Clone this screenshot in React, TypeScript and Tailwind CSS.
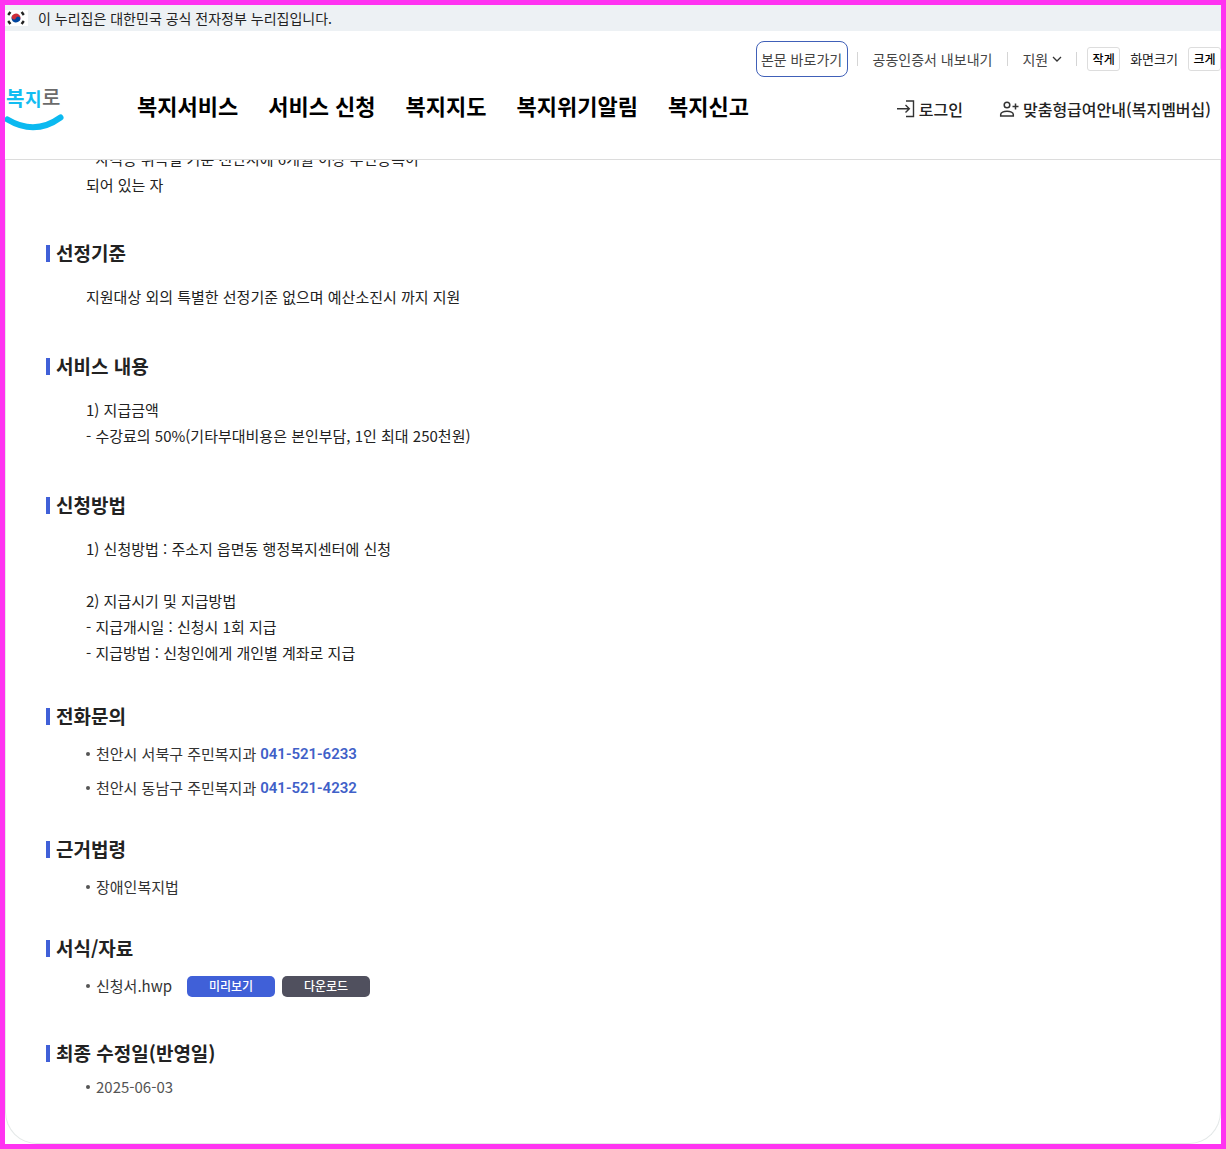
import type { ReactNode } from "react";

const menus = ["복지서비스", "서비스 신청", "복지지도", "복지위기알림", "복지신고"];

const phones = [
  { name: "천안시 서북구 주민복지과", tel: "041-521-6233" },
  { name: "천안시 동남구 주민복지과", tel: "041-521-4232" },
];

function Flag() {
  return (
    <svg className="w-[23px] h-4 bg-white" viewBox="0 0 23 16" aria-hidden="true">
      <g transform="rotate(20 11 8)">
        <path d="M6.500 8a4.500 4.500 0 0 1 9 0z" fill="#cd2e3a" />
        <path d="M6.500 8a4.500 4.500 0 0 0 9 0z" fill="#0047a0" />
        <circle cx="8.750" cy="8" r="2.250" fill="#cd2e3a" />
        <circle cx="13.250" cy="8" r="2.250" fill="#0047a0" />
      </g>
      <g stroke="#222" strokeWidth="2.400">
        <path d="M3.200 5l2.200-3" />
        <path d="M16.600 2l2.200 3" />
        <path d="M3.200 11l2.200 3" />
        <path d="M16.600 14l2.200-3" />
      </g>
    </svg>
  );
}

function Logo() {
  return (
    <svg className="w-[60px] h-[54px]" viewBox="0 0 60 54" role="img" aria-label="복지로">
      <g fontWeight="700">
        <text x="1" y="27" fontSize="20" fill="#12bdf2">복</text>
        <text x="20" y="27" fontSize="18" fill="#12bdf2">지</text>
        <text x="37" y="26" fontSize="20" fontWeight="500" fill="#6b6b6b">로</text>
      </g>
      <path d="M2.500 40.500Q30 57 55.500 38.500" fill="none" stroke="#0bb9f0" strokeWidth="6" strokeLinecap="round" />
    </svg>
  );
}

function Divider() {
  return <span className="w-px h-3.5 bg-[#d5d5d5]" />;
}

function Header() {
  return (
    <header className="flex h-[129px] border-b border-[#dcdcdc]">
      <a href="#" className="mt-12 w-[60px] shrink-0">
        <Logo />
      </a>
      <nav className="mt-[59px] ml-[72px] flex gap-[30px] whitespace-nowrap text-[22px] leading-[30px] font-bold text-black">
        {menus.map((menu) => (
          <a key={menu} href="#">{menu}</a>
        ))}
      </nav>
      <div className="ml-auto flex flex-col items-end whitespace-nowrap">
        <div className="mt-2.5 flex h-9 items-center text-sm text-[#444]">
          <a href="#content" className="flex h-9 w-[92px] items-center justify-center rounded-lg border border-[#4060b8]">본문 바로가기</a>
          <span className="w-[9px]" />
          <Divider />
          <a href="#" className="mx-[15px]">공동인증서 내보내기</a>
          <Divider />
          <button type="button" className="mx-3.5 flex items-center gap-1">
            지원
            <svg className="w-2.5 h-2" viewBox="0 0 10 8" fill="none" stroke="#333" strokeWidth="1.300">
              <path d="M1 2l4 4 4-4" />
            </svg>
          </button>
          <Divider />
          <button type="button" className="ml-2.5 h-6 w-[33px] rounded-[3px] border border-[#ddd] text-xs font-medium text-black">작게</button>
          <span className="mx-2.5 text-[13px] text-[#222]">화면크기</span>
          <button type="button" className="h-6 w-[33px] rounded-[3px] border border-[#ddd] text-xs font-medium text-black">크게</button>
        </div>
        <div className="mt-5 mr-2.5 flex gap-9 text-base font-medium text-[#222]">
          <a href="#" className="flex items-center gap-1">
            <svg className="w-[18px] h-[18px]" viewBox="0 0 18 18" fill="none" stroke="#333" strokeWidth="1.400">
              <path d="M9 1h7.500v15.500H9M0 8.700h12M8.500 5l3.800 3.700-3.800 3.700" />
            </svg>
            로그인
          </a>
          <a href="#" className="flex items-center gap-1">
            <svg className="w-5 h-[18px]" viewBox="0 0 20 18" fill="none" stroke="#333" strokeWidth="1.500">
              <circle cx="8" cy="5" r="2.800" />
              <path d="M1.700 16v-1.500c0-2 3-3.300 6.300-3.300s6.300 1.300 6.300 3.300v1.500zM16.500 3.500v6M13.500 6.500h6" />
            </svg>
            맞춤형급여안내(복지멤버십)
          </a>
        </div>
      </div>
    </header>
  );
}

function Title({ children }: { children: ReactNode }) {
  return (
    <h2 className="flex items-center gap-1.5 text-[19px] leading-[30px] font-bold text-[#222]">
      <span className="w-1 h-[17px] bg-[#4060d8]" />
      {children}
    </h2>
  );
}

function Text({ children }: { children: ReactNode }) {
  return <p className="mt-4 mb-[41px] pl-10 whitespace-pre-line leading-[26px] text-[#222]">{children}</p>;
}

function Item({ children }: { children: ReactNode }) {
  return (
    <li className="flex h-[34px] items-center text-[#333]">
      <span className="mr-1.5 size-1 rounded-full bg-[#555]" />
      {children}
    </li>
  );
}

function App() {
  return (
    <div lang="ko" className="min-h-screen border-5 border-[#ff33f1] bg-white font-['Noto_Sans_CJK_KR',sans-serif]">
      <div className="flex h-[26px] items-center gap-2.5 bg-[#edf1f4] text-sm text-[#222]">
        <Flag />
        이 누리집은 대한민국 공식 전자정부 누리집입니다.
      </div>
      <Header />
      <main id="content" className="overflow-hidden rounded-b-[32px] border border-t-0 border-[#e4e8e8] px-10 pb-[39px] text-[15px]">
        {/* scrolled under the header */}
        <p className="-mt-3.5 mb-10 pl-10 leading-[26px] text-[#222]">
          - 자격증 취득일 기준 천안시에 6개월 이상 주민등록이<br />
          되어 있는 자
        </p>

        <Title>선정기준</Title>
        <Text>지원대상 외의 특별한 선정기준 없으며 예산소진시 까지 지원</Text>

        <Title>서비스 내용</Title>
        <Text>{"1) 지급금액\n- 수강료의 50%(기타부대비용은 본인부담, 1인 최대 250천원)"}</Text>

        <Title>신청방법</Title>
        <Text>{"1) 신청방법 : 주소지 읍면동 행정복지센터에 신청\n\n2) 지급시기 및 지급방법\n- 지급개시일 : 신청시 1회 지급\n- 지급방법 : 신청인에게 개인별 계좌로 지급"}</Text>

        <div className="-mt-1.5">
          <Title>전화문의</Title>
        </div>
        <ul className="mt-1.5 mb-[29px] pl-10">
          {phones.map((phone) => (
            <Item key={phone.tel}>
              {phone.name}
              <a href={`tel:${phone.tel}`} className="ml-1 font-[Roboto,sans-serif] font-semibold text-[#4060c8]">{phone.tel}</a>
            </Item>
          ))}
        </ul>

        <Title>근거법령</Title>
        <ul className="mt-1.5 mb-[29px] pl-10">
          <Item>장애인복지법</Item>
        </ul>

        <Title>서식/자료</Title>
        <ul className="mt-1.5 mb-[35px] pl-10">
          <Item>
            신청서.hwp
            <button type="button" className="ml-[15px] h-[21px] w-[88px] rounded-[5px] bg-[#4060d8] text-xs font-medium text-white">미리보기</button>
            <button type="button" className="ml-[7px] h-[21px] w-[88px] rounded-[5px] bg-[#50505e] text-xs font-medium text-white">다운로드</button>
          </Item>
        </ul>

        <Title>최종 수정일(반영일)</Title>
        <ul className="mt-0.5 pl-10">
          <Item>
            <span className="text-[#555]">2025-06-03</span>
          </Item>
        </ul>
      </main>
    </div>
  );
}

export default App;
